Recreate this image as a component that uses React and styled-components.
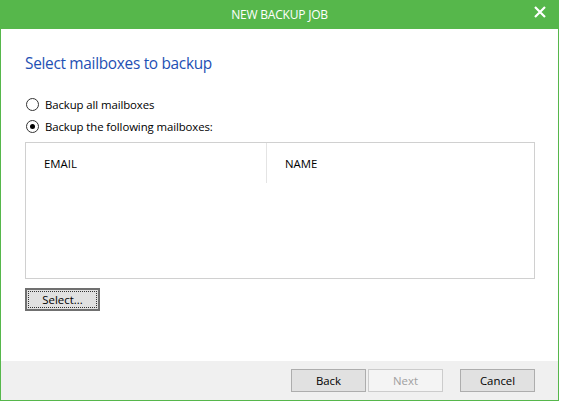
import React, { useState } from 'react';
import styled, { createGlobalStyle } from 'styled-components';

const GlobalStyle = createGlobalStyle`
    body {
        margin: 0;
        background: #ffffff;
        font-family: 'Open Sans', 'Noto Sans', sans-serif;
    }
`

const Window = styled.div`
    width: 559px;
    height: 401px;
    box-sizing: border-box;
    border: 1px solid #56b74b;
    border-top: none;
    display: flex;
    flex-direction: column;
    background: #ffffff;
`

const TitleBar = styled.div`
    height: 29px;
    background: #56b74b;
    margin: 0 -1px;
    display: flex;
    align-items: center;
    justify-content: center;
    position: relative;
    color: #ffffff;
    font-size: 12px;
    letter-spacing: -0.2px;
`

const CloseButton = styled.div`
    position: absolute;
    right: 12px;
    top: 5px;
    width: 14px;
    height: 14px;
    display: flex;
`

const Content = styled.div`
    flex: 1;
    padding: 25px 23px 0 24px;
    display: flex;
    flex-direction: column;
`

const Heading = styled.div`
    color: #1e50b4;
    font-size: 15.4px;
    letter-spacing: -0.3px;
    line-height: 20px;
    margin-bottom: 19px;
`

const RadioRow = styled.label`
    display: flex;
    align-items: center;
    height: 22px;
    font-size: 11.4px;
    color: #000;
    letter-spacing: -0.1px;
`

const RadioCircle = styled.span`
    width: 11px;
    height: 11px;
    border: 1px solid #333;
    border-radius: 50%;
    margin: 0 6px 0 1px;
    display: flex;
    align-items: center;
    justify-content: center;
    box-sizing: content-box;

    &::after {
        content: '';
        width: 5px;
        height: 5px;
        border-radius: 50%;
        background: ${p => p.checked ? '#000' : 'transparent'};
    }
`

const Table = styled.div`
    margin-top: 5px;
    height: 137px;
    box-sizing: border-box;
    border: 1px solid #d0d0d0;
    display: grid;
    grid-template-columns: 241px 1fr;
    align-content: start;
`

const HeaderCell = styled.div`
    height: 40px;
    display: flex;
    align-items: center;
    padding-left: 18px;
    font-size: 11.4px;
    color: #000;
    border-right: ${p => p.divider ? '1px solid #e4e4e4' : 'none'};
`

const Button = styled.button`
    width: 75px;
    height: 23px;
    box-sizing: border-box;
    border: 1px solid ${p => p.disabled ? '#cccccc' : '#adadad'};
    background: ${p => p.disabled ? '#f4f4f4' : '#e1e1e1'};
    color: ${p => p.disabled ? '#a0a0a0' : '#000'};
    font-family: 'Open Sans', 'Noto Sans', sans-serif;
    font-size: 11.4px;
    padding: 0;
    display: flex;
    align-items: center;
    justify-content: center;
`

const FocusButton = styled(Button)`
    margin-top: 9px;
    border: 2px solid #707070;
    position: relative;

    &::before {
        content: '';
        position: absolute;
        inset: 1px;
        border: 1px dotted #333;
    }
`

const Footer = styled.div`
    height: 39px;
    background: #f0f0f0;
    display: flex;
    align-items: flex-start;
    padding: 8px 23px 0 0;
    box-sizing: border-box;
    justify-content: flex-end;
`

const NavGroup = styled.div`
    display: flex;
    gap: 2px;
    margin-right: 17px;
`

export default function App() {
    const [mode, setMode] = useState('following');

    return (
        <>
            <GlobalStyle />
            <Window>
                <TitleBar>
                    NEW BACKUP JOB
                    <CloseButton>
                        <svg width="14" height="14" viewBox="0 0 14 14">
                            <path d="M2 2 L12 12 M12 2 L2 12" stroke="#fff" strokeWidth="2.2" />
                        </svg>
                    </CloseButton>
                </TitleBar>
                <Content>
                    <Heading>Select mailboxes to backup</Heading>
                    <RadioRow onClick={() => setMode('all')}>
                        <RadioCircle checked={mode === 'all'} />
                        Backup all mailboxes
                    </RadioRow>
                    <RadioRow onClick={() => setMode('following')}>
                        <RadioCircle checked={mode === 'following'} />
                        Backup the following mailboxes:
                    </RadioRow>
                    <Table>
                        <HeaderCell divider>EMAIL</HeaderCell>
                        <HeaderCell>NAME</HeaderCell>
                    </Table>
                    <FocusButton>Select...</FocusButton>
                </Content>
                <Footer>
                    <NavGroup>
                        <Button>Back</Button>
                        <Button disabled>Next</Button>
                    </NavGroup>
                    <Button>Cancel</Button>
                </Footer>
            </Window>
        </>
    );
}
